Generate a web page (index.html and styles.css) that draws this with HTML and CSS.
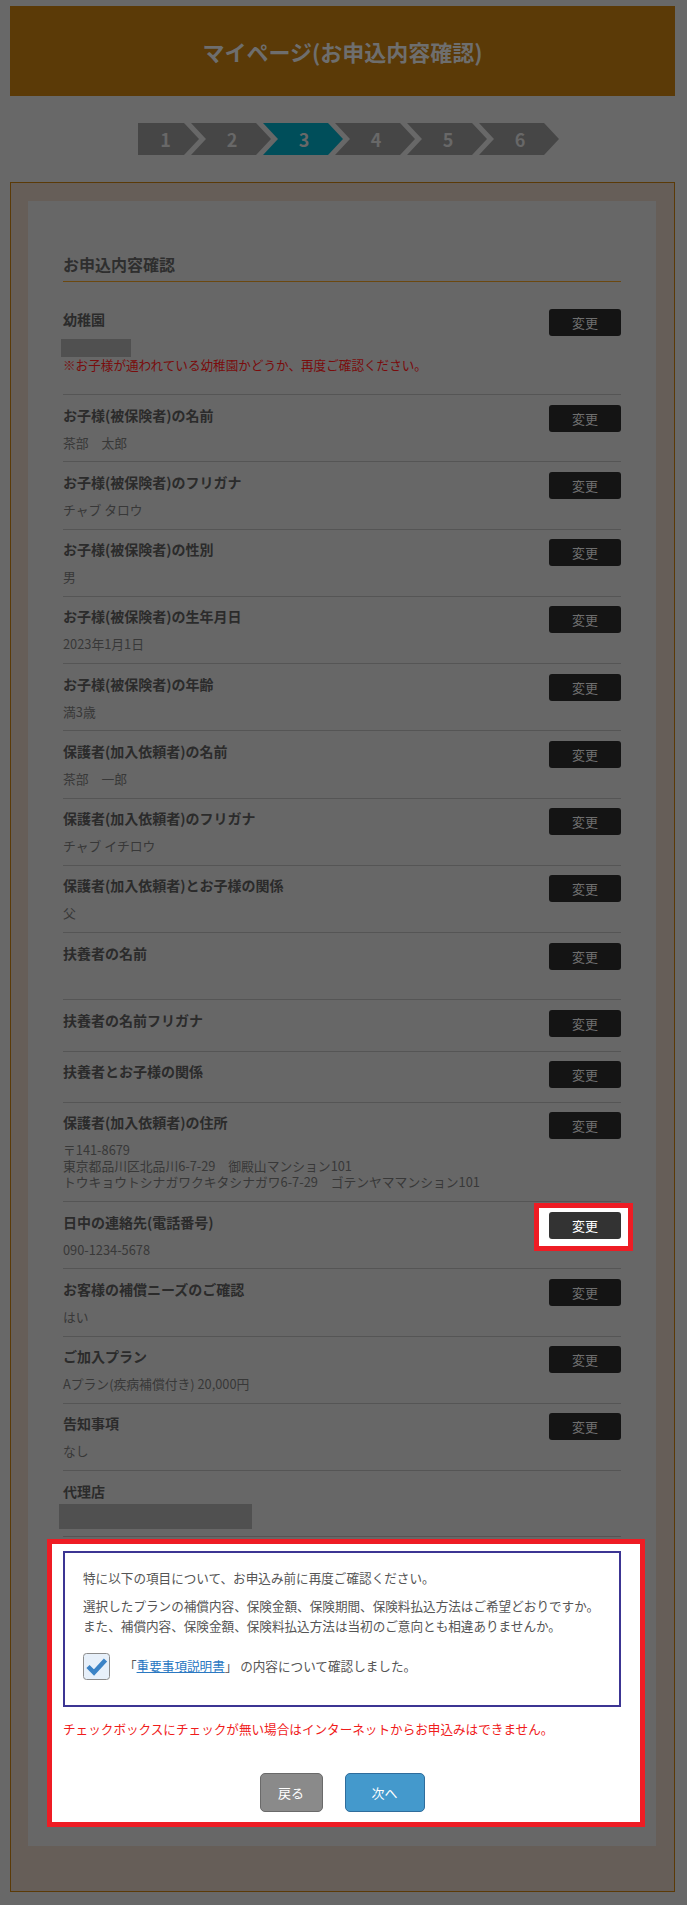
FILE: index.html
```html
<!DOCTYPE html>
<html lang="ja">
  <head>
    <title>マイページ(お申込内容確認)</title>
    <meta charset="UTF-8">
    <meta name="viewport" content="width=device-width, initial-scale=1.0">
    <link rel="stylesheet" href="styles.css">
  </head>
  <body>
    <div class="page">
      <header class="page-head">
        <h1>マイページ(お申込内容確認)</h1>
      </header>

      <ol class="steps">
        <li>1</li>
        <li>2</li>
        <li class="current">3</li>
        <li>4</li>
        <li>5</li>
        <li>6</li>
      </ol>

      <div class="frame">
        <div class="panel">
          <h2 class="panel-title">お申込内容確認</h2>

          <div class="item">
            <div class="item-body">
              <p class="item-label">幼稚園</p>
              <div class="redact redact-school"></div>
              <p class="item-note">※お子様が通われている幼稚園かどうか、再度ご確認ください。</p>
            </div>
            <button class="edit">変更</button>
          </div>

          <div class="item">
            <div class="item-body">
              <p class="item-label">お子様(被保険者)の名前</p>
              <p class="item-value">茶部　太郎</p>
            </div>
            <button class="edit">変更</button>
          </div>

          <div class="item">
            <div class="item-body">
              <p class="item-label">お子様(被保険者)のフリガナ</p>
              <p class="item-value">チャブ タロウ</p>
            </div>
            <button class="edit">変更</button>
          </div>

          <div class="item">
            <div class="item-body">
              <p class="item-label">お子様(被保険者)の性別</p>
              <p class="item-value">男</p>
            </div>
            <button class="edit">変更</button>
          </div>

          <div class="item">
            <div class="item-body">
              <p class="item-label">お子様(被保険者)の生年月日</p>
              <p class="item-value">2023年1月1日</p>
            </div>
            <button class="edit">変更</button>
          </div>

          <div class="item">
            <div class="item-body">
              <p class="item-label">お子様(被保険者)の年齢</p>
              <p class="item-value">満3歳</p>
            </div>
            <button class="edit">変更</button>
          </div>

          <div class="item">
            <div class="item-body">
              <p class="item-label">保護者(加入依頼者)の名前</p>
              <p class="item-value">茶部　一郎</p>
            </div>
            <button class="edit">変更</button>
          </div>

          <div class="item">
            <div class="item-body">
              <p class="item-label">保護者(加入依頼者)のフリガナ</p>
              <p class="item-value">チャブ イチロウ</p>
            </div>
            <button class="edit">変更</button>
          </div>

          <div class="item">
            <div class="item-body">
              <p class="item-label">保護者(加入依頼者)とお子様の関係</p>
              <p class="item-value">父</p>
            </div>
            <button class="edit">変更</button>
          </div>

          <div class="item">
            <div class="item-body">
              <p class="item-label">扶養者の名前</p>
              <p class="item-value"></p>
            </div>
            <button class="edit">変更</button>
          </div>

          <div class="item">
            <div class="item-body">
              <p class="item-label">扶養者の名前フリガナ</p>
            </div>
            <button class="edit">変更</button>
          </div>

          <div class="item">
            <div class="item-body">
              <p class="item-label">扶養者とお子様の関係</p>
            </div>
            <button class="edit">変更</button>
          </div>

          <div class="item">
            <div class="item-body">
              <p class="item-label">保護者(加入依頼者)の住所</p>
              <p class="item-value">〒141-8679<br>東京都品川区北品川6-7-29　御殿山マンション101<br>トウキョウトシナガワクキタシナガワ6-7-29　ゴテンヤママンション101</p>
            </div>
            <button class="edit">変更</button>
          </div>

          <div class="item">
            <div class="item-body">
              <p class="item-label">日中の連絡先(電話番号)</p>
              <p class="item-value">090-1234-5678</p>
            </div>
            <span class="spot">
              <button class="edit edit-active">変更</button>
            </span>
          </div>

          <div class="item">
            <div class="item-body">
              <p class="item-label">お客様の補償ニーズのご確認</p>
              <p class="item-value">はい</p>
            </div>
            <button class="edit">変更</button>
          </div>

          <div class="item">
            <div class="item-body">
              <p class="item-label">ご加入プラン</p>
              <p class="item-value">Aプラン(疾病補償付き) 20,000円</p>
            </div>
            <button class="edit">変更</button>
          </div>

          <div class="item">
            <div class="item-body">
              <p class="item-label">告知事項</p>
              <p class="item-value">なし</p>
            </div>
            <button class="edit">変更</button>
          </div>

          <div class="item item-agency">
            <div class="item-body">
              <p class="item-label">代理店</p>
              <div class="redact redact-agency"></div>
            </div>
          </div>

          <div class="confirm-area">
            <div class="notice">
              <p>特に以下の項目について、お申込み前に再度ご確認ください。</p>
              <p>選択したプランの補償内容、保険金額、保険期間、保険料払込方法はご希望どおりですか。<br>また、補償内容、保険金額、保険料払込方法は当初のご意向とも相違ありませんか。</p>
              <label class="check-row">
                <svg class="check-box" width="27" height="27" viewBox="0 0 27 27">
                  <rect x="0.5" y="0.5" width="26" height="26" rx="3" fill="#e7f0fa" stroke="#8c8c8c"/>
                  <path d="M5 13.5 L11 19.5 L22.5 7" fill="none" stroke="#3b83c6" stroke-width="4.5"/>
                </svg>
                <span>「<a href="#">重要事項説明書</a>」 の内容について確認しました。</span>
              </label>
            </div>
            <p class="warning">チェックボックスにチェックが無い場合はインターネットからお申込みはできません。</p>
            <div class="actions">
              <button class="btn btn-back">戻る</button>
              <button class="btn btn-next">次へ</button>
            </div>
          </div>
        </div>
      </div>
    </div>
  </body>
</html>
```

FILE: styles.css
```css
* {
  box-sizing: border-box;
}

html, body {
  margin: 0;
  background-color: #686868;
  font-family: "Noto Sans CJK JP", sans-serif;
}

p {
  margin: 0;
}

.page {
  padding: 6px 12px 12px 10px;
}

/* header bar */
.page-head {
  display: flex;
  height: 90px;
  align-items: center;
  justify-content: center;
  background-color: #5b3a07;
}

.page-head h1 {
  margin: 0;
  font-size: 22px;
  font-weight: 700;
  color: #6e6e6e;
}

/* step arrows */
.steps {
  display: flex;
  justify-content: center;
  margin: 27px 0;
  padding: 0 0 0 12px;
  list-style: none;
}

.steps li {
  display: flex;
  width: 80px;
  height: 32px;
  margin-left: -8px;
  padding-left: 2px;
  align-items: center;
  justify-content: center;
  background-color: #464646;
  color: #686868;
  font-size: 18px;
  font-weight: 700;
  clip-path: polygon(0 0, 65px 0, 80px 50%, 65px 100%, 0 100%, 15px 50%);
}

.steps li:first-child {
  width: 61px;
  margin-left: 0;
  padding: 0 6px 0 0;
  clip-path: polygon(0 0, 46px 0, 61px 50%, 46px 100%, 0 100%);
}

.steps li.current {
  background-color: #004e5a;
}

/* main frame */
.frame {
  padding: 18px 18px 45px 17px;
  border: 1px solid #5b3a07;
  background-color: #665e58;
}

.panel {
  padding: 51px 35px 19px;
  background-color: #676767;
}

.panel-title {
  margin: 0 0 17px;
  padding-bottom: 5px;
  border-bottom: 1px solid #6b4810;
  font-size: 16px;
  line-height: 24px;
  color: #2e2e2e;
}

.item {
  display: flex;
  align-items: flex-start;
  padding: 9.5px 0 10.75px;
  border-bottom: 1px solid #555;
}

.item-body {
  flex: 1;
}

.item-label {
  margin-bottom: 10px;
  font-size: 14px;
  font-weight: 700;
  line-height: 20px;
  color: #2b2b2b;
}

.item-value {
  min-height: 16px;
  font-size: 12.8px;
  line-height: 16px;
  color: #383838;
}

.item-note {
  margin-bottom: 10.75px;
  font-size: 12.6px;
  line-height: 16px;
  color: #7a0c0c;
}

.redact {
  background-color: #505050;
}

.redact-school {
  width: 70px;
  height: 18px;
  margin-left: -2.5px;
}

.item-agency {
  padding-bottom: 7px;
}

.item-agency .item-label {
  margin-bottom: 3px;
}

.redact-agency {
  width: 193px;
  height: 25px;
  margin-left: -4px;
}

.edit {
  width: 72px;
  height: 27px;
  padding: 0;
  border: 0;
  border-radius: 3px;
  background-color: #141414;
  color: #6e6e6e;
  font-family: inherit;
  font-size: 13px;
}

/* highlighted button */
.spot {
  position: relative;
  z-index: 0;
  display: block;
}

.spot::before {
  content: "";
  position: absolute;
  top: -9px;
  right: -12px;
  bottom: -12px;
  left: -15px;
  z-index: -1;
  border: 5px solid #ee1c24;
  background-color: #fff;
}

.edit-active {
  display: block;
  background-color: #333;
  color: #fff;
}

/* highlighted confirmation area */
.confirm-area {
  margin: 2px -24px 0 -16px;
  padding: 7px 19px 10px 11px;
  border: 5px solid #ee1c24;
  background-color: #fff;
}

.notice {
  padding: 15px 4px 25px 18px;
  border: 2px solid #3c3593;
  color: #555;
  font-size: 12.6px;
  line-height: 20px;
}

.notice p + p {
  margin-top: 8px;
}

.check-row {
  display: flex;
  margin-top: 17px;
  align-items: center;
  gap: 14px;
}

.check-box {
  flex: none;
}

.check-row a {
  color: #2a78c2;
}

.warning {
  margin-top: 12px;
  color: #f01c1c;
  font-size: 12.6px;
  line-height: 20px;
}

.actions {
  display: flex;
  margin-top: 34px;
  justify-content: center;
  gap: 22px;
}

.btn {
  height: 39px;
  padding: 0;
  border-radius: 5px;
  color: #fff;
  font-family: inherit;
  font-size: 13px;
}

.btn-back {
  width: 63px;
  border: 1px solid #6a6a6a;
  background-color: #8a8a8a;
}

.btn-next {
  width: 80px;
  border: 1px solid #2f6d9c;
  background-color: #4499cc;
}
```
